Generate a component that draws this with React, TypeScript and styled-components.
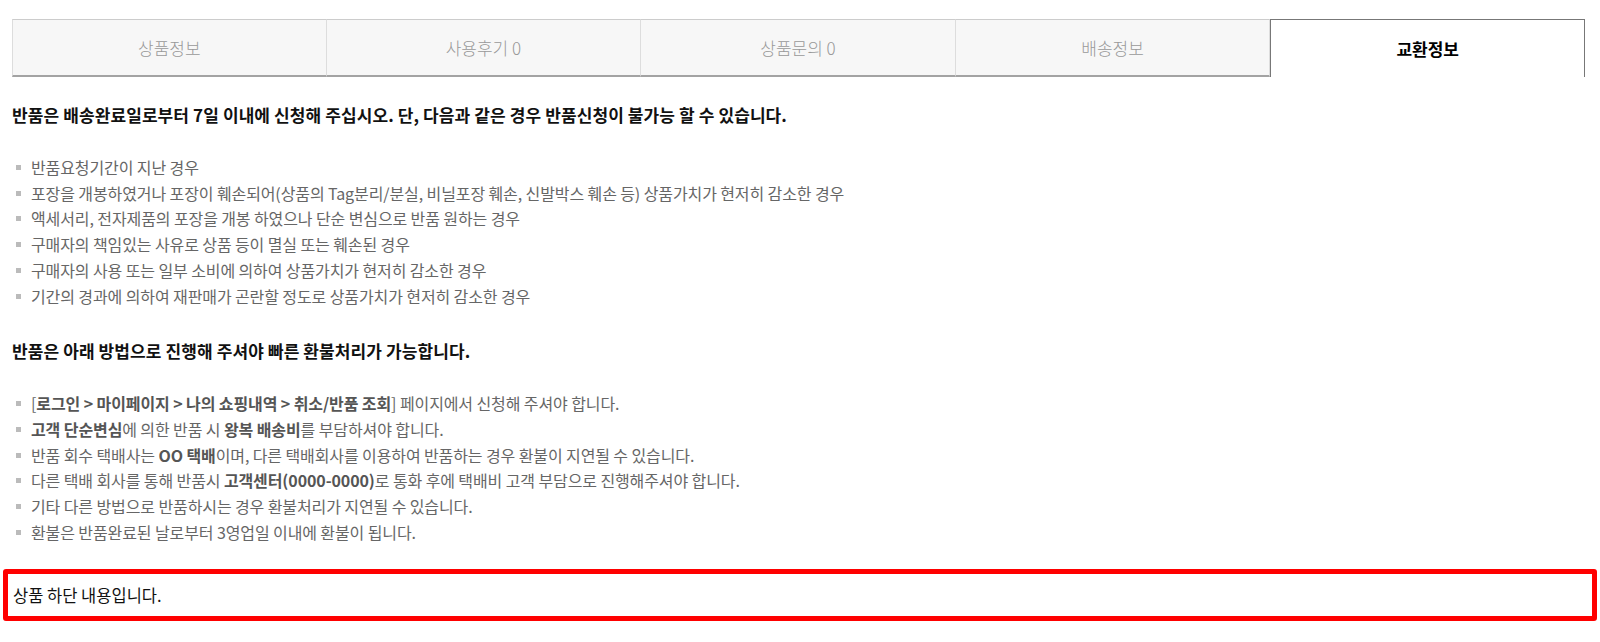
import styled, { createGlobalStyle } from 'styled-components';

const GlobalStyle = createGlobalStyle`
  body {
    margin: 0;
    background: #ffffff;
    font-family: 'Noto Sans CJK KR', 'Noto Sans', sans-serif;
  }
`;

const PageWrapper = styled.div`
  padding: 19px 3px 20px;
`;

const DetailSection = styled.section`
  margin: 0 12px 0 9px;
`;

const TabBar = styled.ul`
  display: grid;
  grid-template-columns: repeat(5, 1fr);
  height: 58px;
  margin: 0;
  padding: 0;
  list-style: none;
`;

const Tab = styled.li<{ $active?: boolean }>`
  display: flex;
  align-items: center;
  justify-content: center;

  font-size: 17px;
  color: ${({ $active }) => ($active ? '#000000' : '#999999')};
  font-weight: ${({ $active }) => ($active ? 700 : 300)};
  background: ${({ $active }) => ($active ? '#ffffff' : '#f7f7f7')};

  border: 1px solid ${({ $active }) => ($active ? '#777777' : '#dddddd')};
  border-top-color: ${({ $active }) => ($active ? '#777777' : '#cccccc')};
  border-bottom: ${({ $active }) => ($active ? 'none' : '2px solid #a3a3a3')};
  border-left-width: ${({ $active }) => ($active ? '1px' : '0')};

  &:first-child {
    border-left-width: 1px;
  }
`;

const Content = styled.div`
  padding: 26px 0 0;
`;

const Title = styled.h3`
  margin: 0;
  font-size: 17px;
  line-height: 24px;
  font-weight: 700;
  letter-spacing: 0.1px;
  color: #111111;
`;

const List = styled.ul<{ $last?: boolean }>`
  margin: 28px 0 ${({ $last }) => ($last ? '24px' : '30px')};
  padding: 0;
  list-style: none;
`;

const Item = styled.li`
  position: relative;
  padding-left: 19px;
  font-size: 16px;
  line-height: 25.7px;
  color: #666666;
  letter-spacing: -0.1px;

  &::before {
    content: '';
    position: absolute;
    left: 4px;
    top: 10px;
    width: 5px;
    height: 5px;
    background: #bbbbbb;
  }

  b {
    color: #555555;
    font-weight: 700;
  }
`;

const BottomNotice = styled.div`
  display: flex;
  align-items: center;
  height: 42px;
  padding: 0 8px 0 5px;
  border: 5px solid #ff0000;
  border-radius: 3px;
  font-size: 16.5px;
  color: #111111;
`;

const tabs = [
  { name: '상품정보' },
  { name: '사용후기 0' },
  { name: '상품문의 0' },
  { name: '배송정보' },
  { name: '교환정보', active: true },
];

const App = () => {
  return (
    <PageWrapper>
      <GlobalStyle />
      <DetailSection>
        <TabBar>
          {tabs.map(({ name, active }) => (
            <Tab key={name} $active={active}>
              {name}
            </Tab>
          ))}
        </TabBar>

        <Content>
          <Title>
            반품은 배송완료일로부터 7일 이내에 신청해 주십시오. 단, 다음과 같은 경우 반품신청이 불가능 할 수 있습니다.
          </Title>
          <List>
            <Item>반품요청기간이 지난 경우</Item>
            <Item>
              포장을 개봉하였거나 포장이 훼손되어(상품의 Tag분리/분실, 비닐포장 훼손, 신발박스 훼손 등) 상품가치가 현저히 감소한 경우
            </Item>
            <Item>액세서리, 전자제품의 포장을 개봉 하였으나 단순 변심으로 반품 원하는 경우</Item>
            <Item>구매자의 책임있는 사유로 상품 등이 멸실 또는 훼손된 경우</Item>
            <Item>구매자의 사용 또는 일부 소비에 의하여 상품가치가 현저히 감소한 경우</Item>
            <Item>기간의 경과에 의하여 재판매가 곤란할 정도로 상품가치가 현저히 감소한 경우</Item>
          </List>

          <Title>반품은 아래 방법으로 진행해 주셔야 빠른 환불처리가 가능합니다.</Title>
          <List $last>
            <Item>
              [<b>로그인 &gt; 마이페이지 &gt; 나의 쇼핑내역 &gt; 취소/반품 조회</b>] 페이지에서 신청해 주셔야 합니다.
            </Item>
            <Item>
              <b>고객 단순변심</b>에 의한 반품 시 <b>왕복 배송비</b>를 부담하셔야 합니다.
            </Item>
            <Item>
              반품 회수 택배사는 <b>OO 택배</b>이며, 다른 택배회사를 이용하여 반품하는 경우 환불이 지연될 수 있습니다.
            </Item>
            <Item>
              다른 택배 회사를 통해 반품시 <b>고객센터(0000-0000)</b>로 통화 후에 택배비 고객 부담으로 진행해주셔야 합니다.
            </Item>
            <Item>기타 다른 방법으로 반품하시는 경우 환불처리가 지연될 수 있습니다.</Item>
            <Item>환불은 반품완료된 날로부터 3영업일 이내에 환불이 됩니다.</Item>
          </List>
        </Content>
      </DetailSection>

      <BottomNotice>상품 하단 내용입니다.</BottomNotice>
    </PageWrapper>
  );
};

export default App;
